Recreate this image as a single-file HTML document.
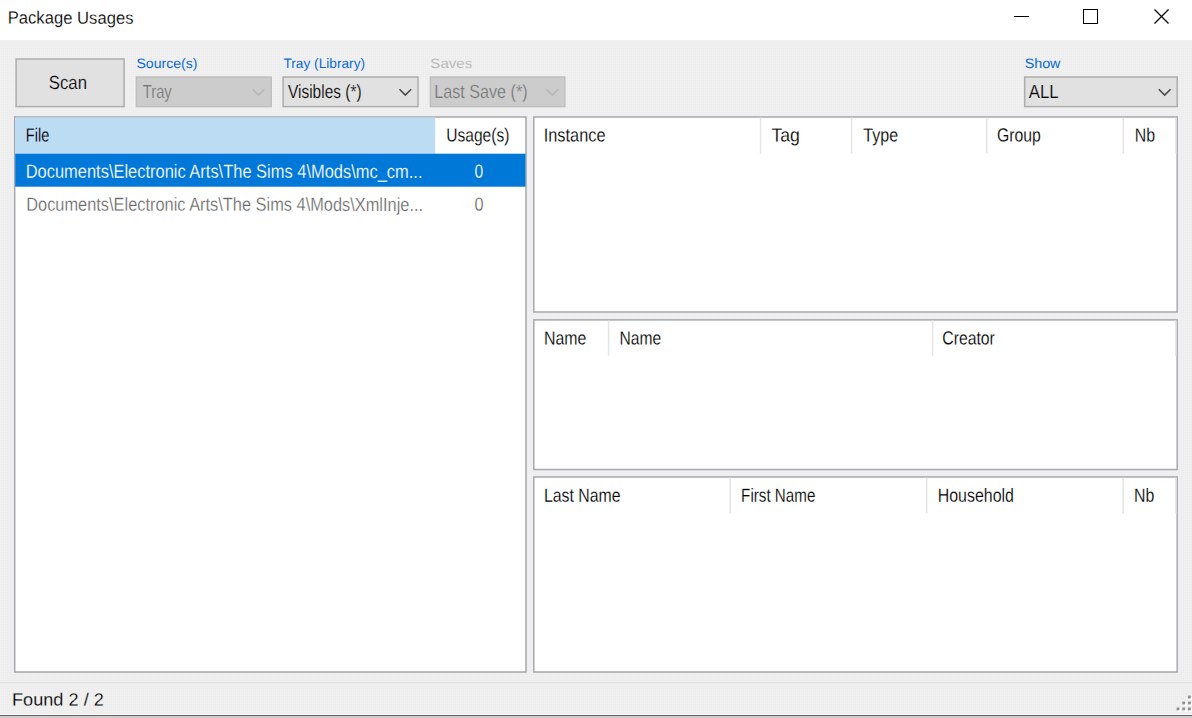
<!DOCTYPE html>
<html><head><meta charset="utf-8"><title>Package Usages</title>
<style>
*{box-sizing:border-box;margin:0;padding:0}
html,body{width:1192px;height:718px;overflow:hidden;background:#f0f0f0;font-family:"Liberation Sans",sans-serif}
#w{position:relative;width:1192px;height:718px;background:#f0f0f0;overflow:hidden}
#tb{position:absolute;left:0;top:0;width:1192px;height:40px;background:#fff}
svg{position:absolute;left:0;top:0}
#txt{font-family:"Liberation Sans",sans-serif;text-rendering:geometricPrecision}
#txt text{white-space:pre}
</style></head><body>
<div id="w">
 <div id="tb"></div>
 <svg style="left:1000px" width="192" height="40" viewBox="0 0 192 40" fill="none" stroke="#000" stroke-width="1">
  <path d="M14 16.5H29"/>
  <rect x="83.5" y="9.5" width="14" height="14"/>
  <path d="M154.5 9.5L168.5 23.5M168.5 9.5L154.5 23.5" stroke-width="1.25"/>
 </svg>


 <svg id="geo" width="1192" height="718" viewBox="0 0 1192 718">
  <defs><pattern id="dz" x="0" y="0" width="2" height="2" patternUnits="userSpaceOnUse"><rect x="1" y="0" width="1" height="1" fill="#ebebeb"/></pattern></defs>
  <rect x="0" y="42" width="1192" height="672" fill="url(#dz)"/>
  <!-- scan button -->
  <rect x="16.1" y="59" width="108" height="47.6" fill="#e1e1e1" stroke="#adadad" stroke-width="1.5"/>
  <!-- combos -->
  <rect x="136.4" y="77" width="134.8" height="29.6" fill="#cccccc" stroke="#bfbfbf" stroke-width="1.5"/>
  <rect x="283.1" y="77" width="134.9" height="29.6" fill="#e1e1e1" stroke="#adadad" stroke-width="1.5"/>
  <rect x="430.4" y="77" width="134.4" height="29.6" fill="#cccccc" stroke="#bfbfbf" stroke-width="1.5"/>
  <rect x="1024.7" y="77" width="152.5" height="29.6" fill="#e1e1e1" stroke="#adadad" stroke-width="1.5"/>
  <g fill="none" stroke-width="1.6">
   <path d="M252.6 89.2L258.5 95.1L264.4 89.2" stroke="#b6b6b6"/>
   <path d="M399.5 89.2L405.3 95.1L411.2 89.2" stroke="#4a4a4a"/>
   <path d="M546.4 89.2L552.3 95.1L558.2 89.2" stroke="#b6b6b6"/>
   <path d="M1158.8 89.2L1164.7 95.1L1170.6 89.2" stroke="#4a4a4a"/>
  </g>
  <!-- list boxes -->
  <g fill="#fff" stroke="#a5a8ad" stroke-width="1.5">
   <rect x="14.7" y="117" width="511.3" height="555"/>
   <rect x="533.8" y="117" width="643.4" height="195"/>
   <rect x="533.8" y="319.9" width="643.4" height="149.6"/>
   <rect x="533.8" y="477" width="643.4" height="195"/>
  </g>
  <rect x="15.2" y="117.5" width="420" height="36.2" fill="#bcdcf4"/>
  <rect x="15.2" y="153.7" width="510.3" height="33" fill="#0078d7"/>
  <g stroke="#e5e5e5" stroke-width="1.5">
   <path d="M760.5 117.6V153.6M851.6 117.6V153.6M986.8 117.6V153.6M1123.3 117.6V153.6M1175.8 117.6V153.6"/>
   <path d="M608.6 320.5V355.8M932.6 320.5V355.8M1175.8 320.5V355.8"/>
   <path d="M730.1 477.6V513.4M926.7 477.6V513.4M1123.1 477.6V513.4M1175.8 477.6V513.4"/>
  </g>
  <!-- grip -->
  <g fill="#ffffff">
   <rect x="1189.4" y="697" width="3" height="3"/>
   <rect x="1183.7" y="703" width="3" height="3"/><rect x="1189.4" y="703" width="3" height="3"/>
   <rect x="1178" y="708.9" width="3" height="3"/><rect x="1183.7" y="708.9" width="3" height="3"/><rect x="1189.4" y="708.9" width="3" height="3"/>
  </g>
  <g fill="#8f8f8f">
   <rect x="1188" y="695.6" width="2.8" height="2.8"/>
   <rect x="1182.3" y="701.6" width="2.8" height="2.8"/><rect x="1188" y="701.6" width="2.8" height="2.8"/>
   <rect x="1176.6" y="707.5" width="2.8" height="2.8"/><rect x="1182.3" y="707.5" width="2.8" height="2.8"/><rect x="1188" y="707.5" width="2.8" height="2.8"/>
  </g>
 </svg>
 <!-- status -->
 <div style="position:absolute;left:0;top:682px;width:1192px;height:1px;background:#e4e4e4"></div>
 <div style="position:absolute;left:0;top:683px;width:1192px;height:1px;background:#ebebeb"></div>
 <div style="position:absolute;left:0;top:714px;width:1192px;height:1px;background:#fcfcfc"></div>
 <div style="position:absolute;left:0;top:715px;width:1192px;height:1px;background:#666"></div>
 <div style="position:absolute;left:0;top:716px;width:1192px;height:2px;background:#cfcfcf"></div>

 <svg id="txt" width="1192" height="718" viewBox="0 0 1192 718">
  <text class="t" id="title" transform="matrix(0.9513,0.0005,0,1,7.65,23.6)" font-size="17.5" fill="#000" stroke="#fff" stroke-width="0.18">Package Usages</text>
  <text class="t" id="scan" transform="matrix(0.8798,0.0005,0,1,48.86,89.0)" font-size="19" fill="#000" stroke="#e1e1e1" stroke-width="0.18">Scan</text>
  <text class="t" id="l1" transform="matrix(1.0301,0.0005,0,1,136.41,68.0)" font-size="13.7" fill="#0b6bd6" stroke="#f0f0f0" stroke-width="0">Source(s)</text>
  <text class="t" id="c1" transform="matrix(0.7785,0.0005,0,1,142.73,98.0)" font-size="19" fill="#767676" stroke="#cccccc" stroke-width="0.25">Tray</text>
  <text class="t" id="l2" transform="matrix(1.0003,0.0005,0,1,283.41,68.0)" font-size="13.7" fill="#0b6bd6" stroke="#f0f0f0" stroke-width="0">Tray (Library)</text>
  <text class="t" id="c2" transform="matrix(0.8132,0.0005,0,1,288.0,98.0)" font-size="19" fill="#000" stroke="#e1e1e1" stroke-width="0.18">Visibles (*)</text>
  <text class="t" id="l3" transform="matrix(1.1,0.0005,0,1,430.37,68.0)" font-size="13.7" fill="#ababab" stroke="#f0f0f0" stroke-width="0.2">Saves</text>
  <text class="t" id="c3" transform="matrix(0.8491,0.0005,0,1,434.33,98.0)" font-size="19" fill="#767676" stroke="#cccccc" stroke-width="0.25">Last Save (*)</text>
  <text class="t" id="l4" transform="matrix(1.0444,0.0005,0,1,1024.66,68.0)" font-size="13.7" fill="#0b6bd6" stroke="#f0f0f0" stroke-width="0">Show</text>
  <text class="t" id="c4" transform="matrix(0.8827,0.0005,0,1,1028.76,98.0)" font-size="19" fill="#000" stroke="#e1e1e1" stroke-width="0.18">ALL</text>
  <text class="t" id="h1" transform="matrix(0.7686,0.0005,0,1,25.87,141.5)" font-size="19" fill="#000" stroke="#bcdcf4" stroke-width="0.18">File</text>
  <text class="t" id="h2" transform="matrix(0.8189,0.0005,0,1,446.3,141.5)" font-size="19" fill="#000" stroke="#fff" stroke-width="0.18">Usage(s)</text>
  <text class="t" id="r1" transform="matrix(0.8659,0.0005,0,1,25.69,177.7)" font-size="19" fill="#fff" stroke="#0078d7" stroke-width="0.18">Documents\Electronic Arts\The Sims 4\Mods\mc_cm...</text>
  <text class="t" id="r1n" transform="matrix(0.8226,0.0005,0,1,474.51,177.7)" font-size="19" fill="#fff" stroke="#0078d7" stroke-width="0.18">0</text>
  <text class="t" id="r2" transform="matrix(0.862,0.0005,0,1,26.2,210.7)" font-size="19" fill="#666666" stroke="#fff" stroke-width="0.25">Documents\Electronic Arts\The Sims 4\Mods\XmlInje...</text>
  <text class="t" id="r2n" transform="matrix(0.8524,0.0005,0,1,474.48,210.7)" font-size="19" fill="#666666" stroke="#fff" stroke-width="0.25">0</text>
  <text class="t" id="a1" transform="matrix(0.8594,0.0005,0,1,543.73,141.5)" font-size="19" fill="#000" stroke="#fff" stroke-width="0.18">Instance</text>
  <text class="t" id="a2" transform="matrix(0.9295,0.0005,0,1,771.45,141.5)" font-size="19" fill="#000" stroke="#fff" stroke-width="0.18">Tag</text>
  <text class="t" id="a3" transform="matrix(0.8465,0.0005,0,1,863.22,141.5)" font-size="19" fill="#000" stroke="#fff" stroke-width="0.18">Type</text>
  <text class="t" id="a4" transform="matrix(0.8313,0.0005,0,1,996.97,141.5)" font-size="19" fill="#000" stroke="#fff" stroke-width="0.18">Group</text>
  <text class="t" id="a5" transform="matrix(0.8402,0.0005,0,1,1134.7,141.5)" font-size="19" fill="#000" stroke="#fff" stroke-width="0.18">Nb</text>
  <text class="t" id="b1" transform="matrix(0.8359,0.0005,0,1,543.95,344.5)" font-size="19" fill="#000" stroke="#fff" stroke-width="0.18">Name</text>
  <text class="t" id="b2" transform="matrix(0.8232,0.0005,0,1,619.39,344.5)" font-size="19" fill="#000" stroke="#fff" stroke-width="0.18">Name</text>
  <text class="t" id="b3" transform="matrix(0.83,0.0005,0,1,942.29,344.5)" font-size="19" fill="#000" stroke="#fff" stroke-width="0.18">Creator</text>
  <text class="t" id="d1" transform="matrix(0.8343,0.0005,0,1,543.98,501.7)" font-size="19" fill="#000" stroke="#fff" stroke-width="0.18">Last Name</text>
  <text class="t" id="d2" transform="matrix(0.8,0.0005,0,1,741.1,501.7)" font-size="19" fill="#000" stroke="#fff" stroke-width="0.18">First Name</text>
  <text class="t" id="d3" transform="matrix(0.8394,0.0005,0,1,937.66,501.7)" font-size="19" fill="#000" stroke="#fff" stroke-width="0.18">Household</text>
  <text class="t" id="d4" transform="matrix(0.8364,0.0005,0,1,1133.94,501.7)" font-size="19" fill="#000" stroke="#fff" stroke-width="0.18">Nb</text>
  <text class="t" id="st" transform="matrix(1.0369,0.0005,0,1,12.01,705.4)" font-size="17.5" fill="#000" stroke="#f0f0f0" stroke-width="0.18">Found 2 / 2</text>
 </svg>
</div>
</body></html>
